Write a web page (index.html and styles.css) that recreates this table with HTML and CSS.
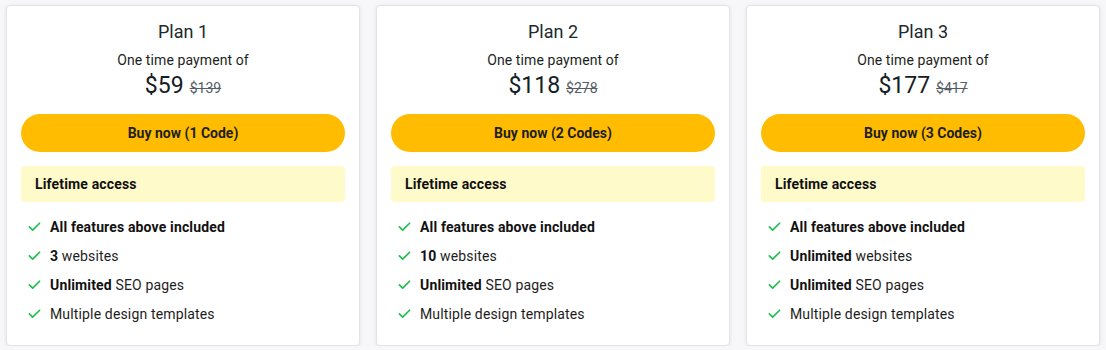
FILE: index.html
```html
<!DOCTYPE html>
<html>
<head>
<meta charset="utf-8">
<link rel="stylesheet" href="styles.css">
</head>
<body>
<div class="plans">
  <div class="card">
    <div class="title">Plan 1</div>
    <div class="sub">One time payment of</div>
    <div class="price"><span class="now">$59</span><span class="old">$139</span></div>
    <button class="buy">Buy now (1 Code)</button>
    <div class="life">Lifetime access</div>
    <ul class="feats">
      <li><svg viewBox="0 0 14 14"><path d="M1.5 7.5 L5 11 L12.5 3.5"/></svg><span><b>All features above included</b></span></li>
      <li><svg viewBox="0 0 14 14"><path d="M1.5 7.5 L5 11 L12.5 3.5"/></svg><span><b>3</b> websites</span></li>
      <li><svg viewBox="0 0 14 14"><path d="M1.5 7.5 L5 11 L12.5 3.5"/></svg><span><b>Unlimited</b> SEO pages</span></li>
      <li><svg viewBox="0 0 14 14"><path d="M1.5 7.5 L5 11 L12.5 3.5"/></svg><span>Multiple design templates</span></li>
    </ul>
  </div>
  <div class="card">
    <div class="title">Plan 2</div>
    <div class="sub">One time payment of</div>
    <div class="price"><span class="now">$118</span><span class="old">$278</span></div>
    <button class="buy">Buy now (2 Codes)</button>
    <div class="life">Lifetime access</div>
    <ul class="feats">
      <li><svg viewBox="0 0 14 14"><path d="M1.5 7.5 L5 11 L12.5 3.5"/></svg><span><b>All features above included</b></span></li>
      <li><svg viewBox="0 0 14 14"><path d="M1.5 7.5 L5 11 L12.5 3.5"/></svg><span><b>10</b> websites</span></li>
      <li><svg viewBox="0 0 14 14"><path d="M1.5 7.5 L5 11 L12.5 3.5"/></svg><span><b>Unlimited</b> SEO pages</span></li>
      <li><svg viewBox="0 0 14 14"><path d="M1.5 7.5 L5 11 L12.5 3.5"/></svg><span>Multiple design templates</span></li>
    </ul>
  </div>
  <div class="card">
    <div class="title">Plan 3</div>
    <div class="sub">One time payment of</div>
    <div class="price"><span class="now">$177</span><span class="old">$417</span></div>
    <button class="buy">Buy now (3 Codes)</button>
    <div class="life">Lifetime access</div>
    <ul class="feats">
      <li><svg viewBox="0 0 14 14"><path d="M1.5 7.5 L5 11 L12.5 3.5"/></svg><span><b>All features above included</b></span></li>
      <li><svg viewBox="0 0 14 14"><path d="M1.5 7.5 L5 11 L12.5 3.5"/></svg><span><b>Unlimited</b> websites</span></li>
      <li><svg viewBox="0 0 14 14"><path d="M1.5 7.5 L5 11 L12.5 3.5"/></svg><span><b>Unlimited</b> SEO pages</span></li>
      <li><svg viewBox="0 0 14 14"><path d="M1.5 7.5 L5 11 L12.5 3.5"/></svg><span>Multiple design templates</span></li>
    </ul>
  </div>
</div>
</body>
</html>
```
FILE: styles.css
```css
html, body {
  margin: 0;
  padding: 0;
  background: #f7f7f9;
  font-family: Roboto, "Liberation Sans", sans-serif;
  color: #1d2327;
}
.plans {
  display: grid;
  grid-template-columns: repeat(3, 1fr);
  gap: 16px;
  padding: 5px 6px 0;
}
.card {
  background: #fff;
  border: 1px solid #e2e2ea;
  border-radius: 4px;
  box-shadow: 0 1px 4px rgba(0, 0, 0, 0.08);
  padding: 14px 14px 17px;
  height: 341px;
  box-sizing: border-box;
  display: flex;
  flex-direction: column;
}
.title {
  text-align: center;
  font-size: 18px;
  line-height: 24px;
  color: #1b2a2e;
  margin-bottom: 6px;
}
.sub {
  text-align: center;
  font-size: 14px;
  line-height: 20px;
  letter-spacing: 0.1px;
  color: #1b1f22;
}
.price {
  display: flex;
  justify-content: center;
  align-items: baseline;
  gap: 6px;
  margin-top: 1px;
}
.price .now {
  font-size: 23px;
  line-height: 30px;
  color: #142024;
}
.price .old {
  font-size: 14px;
  color: #555d66;
  text-decoration: line-through;
}
.buy {
  display: block;
  width: 100%;
  height: 38px;
  margin-top: 13px;
  border: none;
  border-radius: 19px;
  background: #ffbc00;
  font-family: Roboto, "Liberation Sans", sans-serif;
  font-size: 14px;
  font-weight: 700;
  color: #1e1e1e;
  cursor: pointer;
}
.life {
  margin-top: 14px;
  background: #fffaca;
  border-radius: 4px;
  height: 36px;
  line-height: 36px;
  padding-left: 14px;
  font-size: 14px;
  font-weight: 700;
  letter-spacing: 0.15px;
  color: #111;
}
.feats {
  list-style: none;
  margin: 10px 0 0;
  padding: 0 0 0 7px;
}
.feats li {
  display: flex;
  align-items: center;
  height: 29px;
  font-size: 14px;
  letter-spacing: 0.15px;
  color: #1d1d1d;
}
.feats svg {
  width: 13px;
  height: 13px;
  margin-right: 9px;
  fill: none;
  stroke: #1fbe4e;
  stroke-width: 1.8;
  stroke-linecap: round;
  stroke-linejoin: round;
}
.feats b {
  font-weight: 700;
  color: #111;
}
```
